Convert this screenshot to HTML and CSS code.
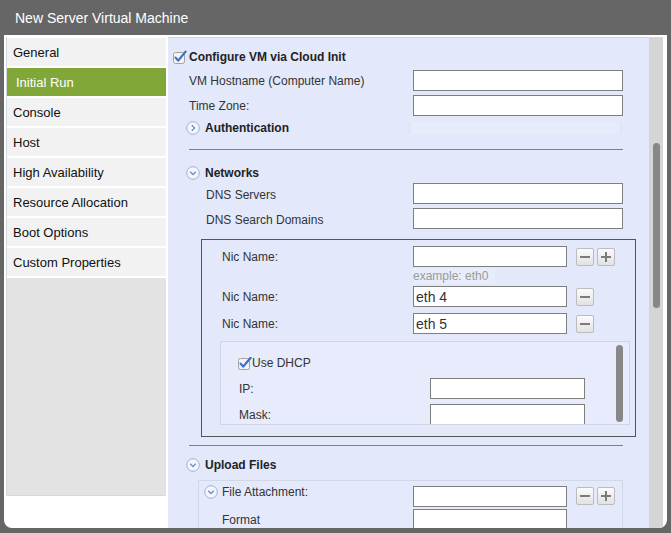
FILE: index.html
```html
<!DOCTYPE html>
<html>
<head>
<meta charset="utf-8">
<title>New Server Virtual Machine</title>
<link rel="stylesheet" href="styles.css">
</head>
<body>
<div class="titlebar">New Server Virtual Machine</div>
<div class="dialog">
  <nav class="nav">
    <div class="item">General</div>
    <div class="item active">Initial Run</div>
    <div class="item">Console</div>
    <div class="item">Host</div>
    <div class="item">High Availability</div>
    <div class="item">Resource Allocation</div>
    <div class="item">Boot Options</div>
    <div class="item">Custom Properties</div>
    <div class="filler"></div>
  </nav>
  <div class="main">
    <div class="content">
      <div class="row row-cfg">
        <svg class="cb cb-big" width="14" height="14" viewBox="0 0 14 14"><rect x="0.5" y="2.5" width="11" height="11" rx="2" fill="#f3f3f3" stroke="#a3a3a3"/><path d="M2.6 7.6 L5.2 10.6 L12.6 1.6" fill="none" stroke="#3a6cc8" stroke-width="2.2" stroke-linecap="round" stroke-linejoin="round"/></svg>
        <span class="head">Configure VM via Cloud Init</span>
      </div>
      <div class="row row-b">
        <span class="lbl lbl-top">VM Hostname (Computer Name)</span>
        <input class="inp inp-wide" type="text">
      </div>
      <div class="row row-c">
        <span class="lbl lbl-top">Time Zone:</span>
        <input class="inp inp-wide" type="text">
      </div>
      <div class="row row-sec row-auth">
        <svg class="chev" width="14" height="14" viewBox="0 0 14 14"><circle cx="7" cy="7" r="6.3" fill="#f3f6fd" stroke="#9db0d6"/><path d="M5.8 4.2 L8.6 7 L5.8 9.8" fill="none" stroke="#7a90bd" stroke-width="1.4"/></svg>
        <span class="head sec-title">Authentication</span>
        <span class="ghost"></span>
      </div>
      <div class="hr hr-1"></div>
      <div class="row row-sec row-net">
        <svg class="chev" width="14" height="14" viewBox="0 0 14 14"><circle cx="7" cy="7" r="6.3" fill="#f3f6fd" stroke="#9db0d6"/><path d="M4.2 5.8 L7 8.6 L9.8 5.8" fill="none" stroke="#7a90bd" stroke-width="1.4"/></svg>
        <span class="head">Networks</span>
      </div>
      <div class="row row-f">
        <span class="lbl lbl-net">DNS Servers</span>
        <input class="inp inp-wide" type="text">
      </div>
      <div class="row row-g">
        <span class="lbl lbl-net">DNS Search Domains</span>
        <input class="inp inp-wide" type="text">
      </div>
      <div class="nics">
        <div class="row nic-1">
          <span class="lbl lbl-nic">Nic Name:</span>
          <input class="inp inp-mid" type="text">
          <span class="btn btn-first"><svg width="10" height="10" viewBox="0 0 10 10"><rect x="0" y="4" width="10" height="2" fill="#7b7b7b"/></svg></span>
          <span class="btn btn-next"><svg width="10" height="10" viewBox="0 0 10 10"><rect x="0" y="4" width="10" height="2" fill="#7b7b7b"/><rect x="4" y="0" width="2" height="10" fill="#7b7b7b"/></svg></span>
        </div>
        <div class="hint">example: eth0</div>
        <div class="row nic-2">
          <span class="lbl lbl-nic">Nic Name:</span>
          <input class="inp inp-mid" type="text" value="eth 4">
          <span class="btn btn-first"><svg width="10" height="10" viewBox="0 0 10 10"><rect x="0" y="4" width="10" height="2" fill="#7b7b7b"/></svg></span>
        </div>
        <div class="row nic-3">
          <span class="lbl lbl-nic">Nic Name:</span>
          <input class="inp inp-mid" type="text" value="eth 5">
          <span class="btn btn-first"><svg width="10" height="10" viewBox="0 0 10 10"><rect x="0" y="4" width="10" height="2" fill="#7b7b7b"/></svg></span>
        </div>
        <div class="dhcp">
          <div class="dhcp-body">
            <div class="row row-dhcp">
              <svg class="cb" width="14" height="13" viewBox="0 0 14 13"><rect x="0.5" y="1.5" width="11" height="11" rx="2" fill="#f3f3f3" stroke="#a3a3a3"/><path d="M2.6 6.6 L5.2 9.6 L12.6 0.8" fill="none" stroke="#3a6cc8" stroke-width="2.2" stroke-linecap="round" stroke-linejoin="round"/></svg>
              <span class="plain">Use DHCP</span>
            </div>
            <div class="row row-ip">
              <span class="lbl lbl-dhcp">IP:</span>
              <input class="inp inp-ip" type="text">
            </div>
            <div class="row row-mask">
              <span class="lbl lbl-dhcp">Mask:</span>
              <input class="inp inp-ip" type="text">
            </div>
          </div>
          <div class="dhcp-thumb"></div>
        </div>
      </div>
      <div class="hr hr-2"></div>
      <div class="row row-sec row-up">
        <svg class="chev" width="14" height="14" viewBox="0 0 14 14"><circle cx="7" cy="7" r="6.3" fill="#f3f6fd" stroke="#9db0d6"/><path d="M4.2 5.8 L7 8.6 L9.8 5.8" fill="none" stroke="#7a90bd" stroke-width="1.4"/></svg>
        <span class="head">Upload Files</span>
      </div>
      <div class="files">
        <div class="row row-att">
          <svg class="chev chev-att" width="14" height="14" viewBox="0 0 14 14"><circle cx="7" cy="7" r="6.3" fill="#f3f6fd" stroke="#9db0d6"/><path d="M4.2 5.8 L7 8.6 L9.8 5.8" fill="none" stroke="#7a90bd" stroke-width="1.4"/></svg>
          <span class="lbl lbl-att">File Attachment:</span>
          <input class="inp inp-mid inp-att" type="text">
          <span class="btn btn-first btn-att"><svg width="10" height="10" viewBox="0 0 10 10"><rect x="0" y="4" width="10" height="2" fill="#7b7b7b"/></svg></span>
          <span class="btn btn-next btn-att"><svg width="10" height="10" viewBox="0 0 10 10"><rect x="0" y="4" width="10" height="2" fill="#7b7b7b"/><rect x="4" y="0" width="2" height="10" fill="#7b7b7b"/></svg></span>
        </div>
        <div class="row row-fmt">
          <span class="lbl lbl-fmt">Format</span>
          <input class="inp inp-mid" type="text">
        </div>
      </div>
    </div>
    <div class="track"><div class="thumb"></div></div>
  </div>
</div>
</body>
</html>
```
FILE: styles.css
```css
html, body {
  margin: 0;
  padding: 0;
}
body {
  background: #666666;
  font-family: "Liberation Sans", Arial, sans-serif;
  width: 671px;
  height: 533px;
  overflow: hidden;
}
.titlebar {
  height: 35px;
  line-height: 36px;
  padding-left: 15px;
  color: #ffffff;
  font-size: 14px;
  box-sizing: border-box;
}
.dialog {
  margin-left: 4px;
  width: 663px;
  height: 493px;
  padding-top: 2px;
  box-sizing: border-box;
  background: #ffffff;
  border-radius: 0 0 8px 8px;
  display: flex;
  overflow: hidden;
}
/* left navigation */
.nav {
  margin-left: 2px;
  width: 160px;
  height: 459px;
  padding-top: 1px;
  box-sizing: border-box;
  display: flex;
  flex-direction: column;
  gap: 2px;
  border-left: 1px solid #d4d8e0;
  border-bottom: 1px solid #d4d8e0;
  background: #ffffff;
}
.item {
  height: 28px;
  line-height: 29px;
  padding-left: 6px;
  background: #f2f2f2;
  color: #111111;
  font-size: 13px;
  flex: none;
}
.item.active {
  background: #82a739;
  color: #ffffff;
  padding-left: 9px;
}
.filler {
  flex: 1;
  background: #e3e3e3;
}
/* main panel */
.main {
  margin-left: 2px;
  width: 495px;
  height: 491px;
  border-top: 1px solid #d2d6de;
  display: flex;
}
.content {
  flex: 1;
  background: #e3e9fb;
  overflow: hidden;
  font-size: 12px;
  color: #333333;
}
.track {
  width: 14px;
  background: #d5d5d5;
}
.thumb {
  margin: 105px auto 0;
  width: 7px;
  height: 165px;
  background: #878787;
  border-radius: 4px;
}
.row {
  display: flex;
  align-items: center;
}
.head {
  font-weight: bold;
  color: #222222;
  font-size: 12px;
}
.plain {
  color: #333333;
}
.lbl {
  flex: none;
  white-space: nowrap;
}
.inp {
  box-sizing: border-box;
  height: 21px;
  margin: 0;
  padding: 0 0 0 2px;
  border: 1px solid #7f7f7f;
  border-radius: 0;
  background: #ffffff;
  font-family: "Liberation Sans", Arial, sans-serif;
  font-size: 14px;
  color: #333333;
  outline: none;
  flex: none;
}
.inp-wide { width: 210px; }
.inp-mid { width: 154px; }
.inp-ip { width: 155px; }
.btn {
  box-sizing: border-box;
  width: 18px;
  height: 18px;
  border: 1px solid #bcbcbc;
  border-radius: 2px;
  background: linear-gradient(#fbfbfb, #e2e2e2);
  display: flex;
  align-items: center;
  justify-content: center;
  flex: none;
}
.btn-first { margin-left: 9px; }
.btn-next { margin-left: 3px; }
.cb { flex: none; }
.chev { flex: none; }

/* first section */
.row-cfg {
  margin-top: 8px;
  height: 22px;
  padding-left: 5px;
}
.cb-big { margin-right: 2px; }
.row-b { margin-top: 2px; height: 21px; }
.row-c { margin-top: 4px; height: 21px; }
.lbl-top {
  margin-left: 21px;
  width: 224px;
}
.row-sec {
  padding-left: 18px;
}
.row-sec .chev { margin-right: 5px; }
.row-auth { margin-top: 1px; height: 22px; }
.sec-title { width: 204px; }
.ghost {
  width: 210px;
  height: 12px;
  background: #e7ecfb;
  border-left: 1px solid #d9e0f0;
  border-right: 1px solid #d9e0f0;
}
.hr {
  height: 1px;
  background: #808080;
  margin-left: 21px;
  width: 434px;
}
.hr-1 { margin-top: 10px; }
.row-net { margin-top: 13px; height: 20px; }
.row-f { height: 21px; }
.row-g { margin-top: 4px; height: 21px; }
.lbl-net {
  margin-left: 38px;
  width: 207px;
  padding-top: 2px;
}
/* nic fieldset */
.nics {
  margin-top: 10px;
  margin-left: 33px;
  width: 435px;
  height: 198px;
  box-sizing: border-box;
  border: 1px solid #555555;
}
.lbl-nic {
  margin-left: 20px;
  width: 191px;
}
.nic-1 { margin-top: 6px; height: 21px; }
.hint {
  margin-top: 1px;
  margin-left: 211px;
  width: 82px;
  height: 16px;
  line-height: 16px;
  color: #9a9a9a;
  background: #e8edfb;
}
.nic-2 { margin-top: 2px; height: 21px; }
.nic-3 { margin-top: 6px; height: 21px; }
.dhcp {
  margin-top: 7px;
  margin-left: 18px;
  width: 410px;
  height: 84px;
  box-sizing: border-box;
  border: 1px solid #cfd5e2;
  background: #e7ebfb;
  display: flex;
  overflow: hidden;
}
.dhcp-body {
  flex: 1;
}
.row-dhcp {
  margin-top: 12px;
  height: 18px;
  padding-left: 17px;
}
.row-ip { margin-top: 6px; height: 21px; }
.row-mask { margin-top: 5px; height: 21px; }
.lbl-dhcp {
  margin-left: 18px;
  width: 191px;
}
.dhcp-thumb {
  margin-top: 3px;
  margin-right: 6px;
  width: 7px;
  height: 77px;
  background: #878787;
  border-radius: 4px;
  flex: none;
}
.hr-2 { margin-top: 8px; }
.row-up { margin-top: 9px; height: 20px; }
/* files */
.files {
  margin-top: 5px;
  margin-left: 30px;
  width: 425px;
  height: 80px;
  box-sizing: border-box;
  border: 1px solid #d0d7e5;
  background: #e4eafb;
}
.row-att {
  margin-top: 4px;
  padding-left: 5px;
  align-items: flex-start;
}
.chev-att { margin-right: 4px; }
.lbl-att {
  width: 191px;
  line-height: 14px;
}
.inp-att { margin-top: 1px; }
.btn-att { margin-top: 2px; }
.row-fmt { margin-top: 2px; height: 21px; }
.lbl-fmt {
  margin-left: 23px;
  width: 191px;
}
```
